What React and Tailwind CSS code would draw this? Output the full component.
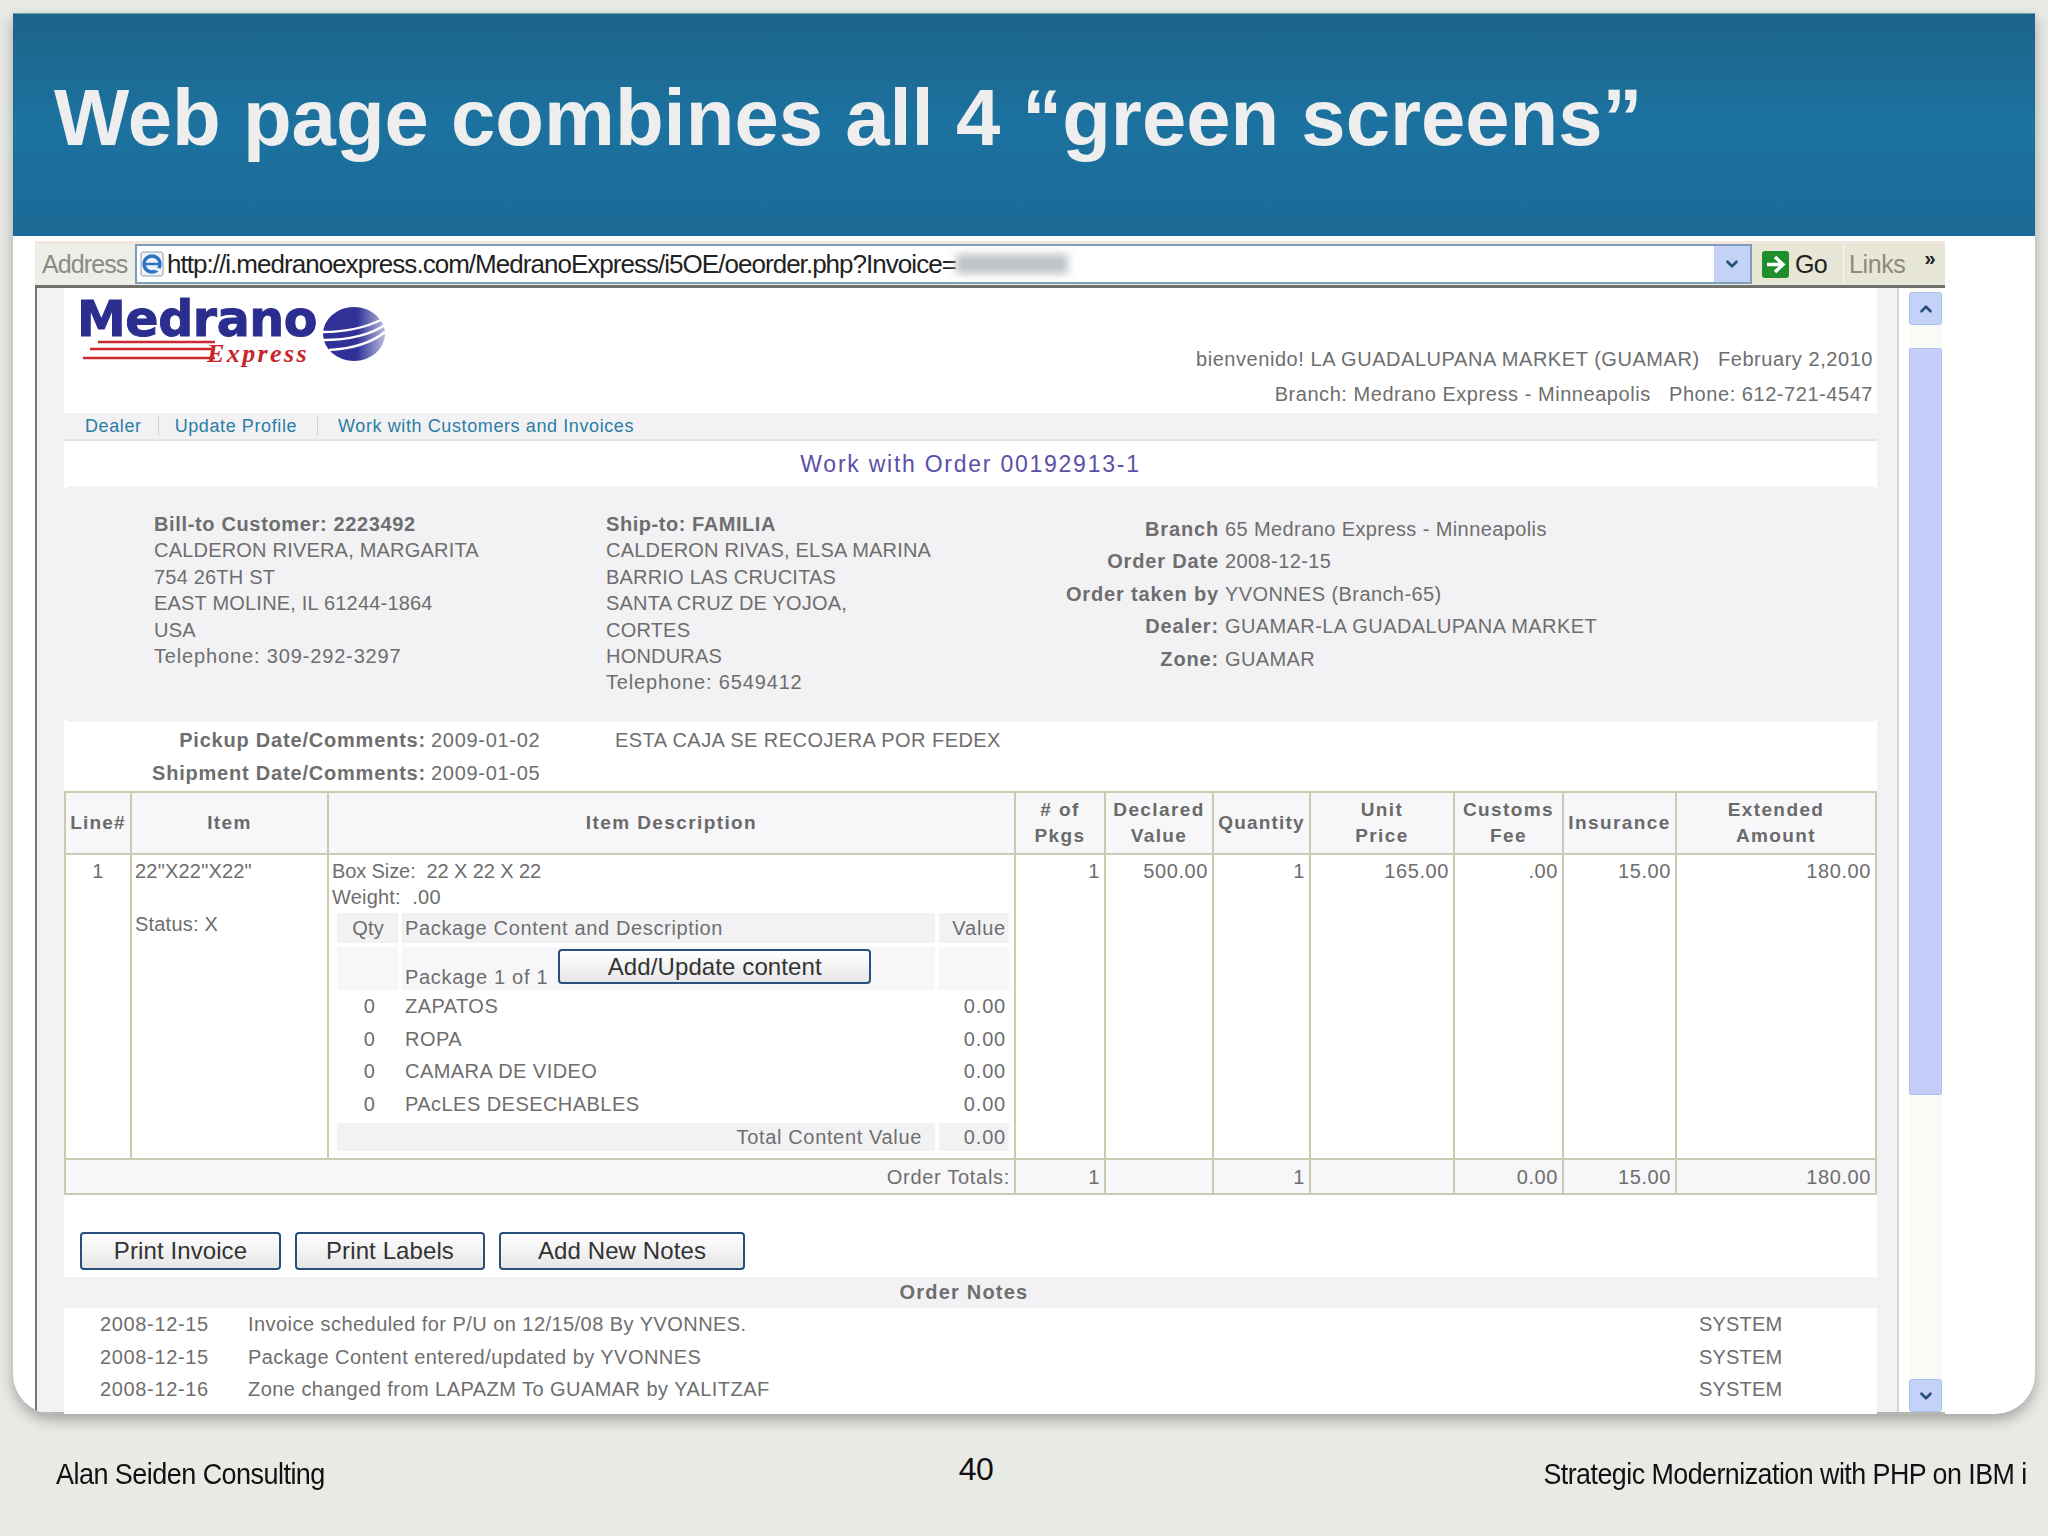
import { ChevronDown, ChevronUp } from 'lucide-react';

const billTo = ['CALDERON RIVERA, MARGARITA', '754 26TH ST', 'EAST MOLINE, IL 61244-1864', 'USA'];
const shipTo = ['CALDERON RIVAS, ELSA MARINA', 'BARRIO LAS CRUCITAS', 'SANTA CRUZ DE YOJOA,', 'CORTES', 'HONDURAS'];
const orderInfo = [
  ['Branch', '65 Medrano Express - Minneapolis'],
  ['Order Date', '2008-12-15'],
  ['Order taken by', 'YVONNES (Branch-65)'],
  ['Dealer:', 'GUAMAR-LA GUADALUPANA MARKET'],
  ['Zone:', 'GUAMAR']
];
const columnWidths = [66, 197, 687, 90, 108, 97, 144, 109, 113, 200];
const packageItems = ['ZAPATOS', 'ROPA', 'CAMARA DE VIDEO', 'PAcLES DESECHABLES'];
const orderNotes = [
  ['2008-12-15', 'Invoice scheduled for P/U on 12/15/08 By YVONNES.'],
  ['2008-12-15', 'Package Content entered/updated by YVONNES'],
  ['2008-12-16', 'Zone changed from LAPAZM To GUAMAR by YALITZAF']
];

function HeaderCell({ children }) {
  return (
    <th className="border-2 border-[#c9ccb2] bg-[#f7f7f9] p-0 text-center align-middle text-[19px] leading-[26px] font-bold tracking-[1.4px] text-[#6a6a6a]">
      {children}
    </th>
  );
}

function NumberCell({ children, shaded }) {
  return (
    <td className={`border-2 border-[#c9ccb2] pr-[4px] pl-1 text-right text-[20px] tracking-[0.6px] ${shaded ? 'bg-[#f7f7f9] py-0 align-middle' : 'bg-white pt-[1px] pb-0 align-top'}`}>
      {children}
    </td>
  );
}

function WebButton({ className, children }) {
  return (
    <button className={`rounded-[4px] border-2 border-[#27507f] bg-gradient-to-b from-white to-[#e6e6e6] text-[24px] leading-none tracking-[0.1px] text-[#333] ${className}`}>
      {children}
    </button>
  );
}

function Logo() {
  return (
    <div className="relative h-[110px] w-[320px]">
      <span className="absolute top-[5px] left-[0px] font-['DejaVu_Sans',sans-serif] text-[49px] leading-[38px] font-bold tracking-[-0.4px] text-[#2c2e8f] [-webkit-text-stroke:1px_#2c2e8f]">Medrano</span>
      <span className="absolute top-[48px] left-[130px] font-['Liberation_Serif',serif] text-[26px] leading-[20px] font-bold tracking-[2.4px] text-[#c8262c] italic">Express</span>
      <svg className="absolute top-0 left-0" width="320" height="80" viewBox="0 0 320 80">
        <g stroke="#cc2a2e" strokeWidth="2.5">
          <line x1="21" y1="46" x2="138" y2="46" />
          <line x1="13" y1="53" x2="138" y2="53" />
          <line x1="6" y1="62" x2="138" y2="62" />
        </g>
        <defs>
          <linearGradient id="globe" x1="0" x2="1">
            <stop offset="0.55" stopColor="#2f3196" />
            <stop offset="1" stopColor="#b9bbdd" />
          </linearGradient>
        </defs>
        <ellipse cx="277" cy="38" rx="31" ry="27" fill="url(#globe)" />
        <g fill="none" stroke="#fff" strokeWidth="2.5">
          <path d="M246 36 Q280 36 306 23" />
          <path d="M246 44 Q285 44 308 29" />
          <path d="M252 54 Q288 52 308 36" />
        </g>
      </svg>
    </div>
  );
}

function AddressBar() {
  return (
    <div className="flex h-[47px] items-start border-t-[3px] border-b-[3px] border-t-[#f3e6dc] border-b-[#6f706a] bg-[#eceee8]">
      <span className="mt-[5px] ml-[7px] w-[93px] text-[25px] leading-[30px] tracking-[-0.9px] text-[#8a8a86]">Address</span>
      <div className="flex h-[40px] w-[1617px] items-center border-2 border-[#7f9db9] bg-white">
        <svg className="ml-[3px] shrink-0" width="24" height="26" viewBox="0 0 24 26">
          <rect x="1" y="1" width="22" height="24" rx="2" fill="#eef3fb" stroke="#8aa0bd" />
          <circle cx="12" cy="13" r="8" fill="none" stroke="#2f74c0" strokeWidth="3.5" />
          <line x1="5" y1="13" x2="19" y2="13" stroke="#2f74c0" strokeWidth="2.5" />
          <line x1="14" y1="17" x2="22" y2="20" stroke="#eef3fb" strokeWidth="3" />
        </svg>
        <span className="ml-[3px] text-[26px] tracking-[-0.97px] whitespace-nowrap text-[#222]">http://i.medranoexpress.com/MedranoExpress/i5OE/oeorder.php?Invoice=</span>
        <div className="h-[20px] w-[112px] bg-[#bfc3c8] blur-[4px]"></div>
        <div className="ml-auto flex h-full w-[36px] items-center justify-center bg-[#c5d2f7] text-[#27507f]">
          <ChevronDown size={18} strokeWidth={3.5} />
        </div>
      </div>
      <div className="flex h-[41px] flex-1 items-center bg-[#e8e6d6]">
        <svg className="ml-[10px] shrink-0" width="27" height="27" viewBox="0 0 27 27">
          <rect width="27" height="27" rx="3" fill="#1f8f2c" />
          <path d="M5 13.5H20M13 6l8 7.5-8 7.5" fill="none" stroke="#fff" strokeWidth="3.5" />
        </svg>
        <span className="ml-[6px] w-[48px] text-[25px] tracking-[-0.8px] text-[#222]">Go</span>
        <span className="h-full border-l border-[#f8f8f0]"></span>
        <span className="ml-[5px] text-[25px] tracking-[-0.4px] text-[#8a8a80]">Links</span>
        <span className="mb-[14px] ml-[19px] text-[20px] leading-none font-bold text-[#222]">»</span>
      </div>
    </div>
  );
}

function OrderTable() {
  return (
    <table className="w-[1812px] table-fixed border-collapse border-2 border-[#c9ccb2]">
      <colgroup>
        {columnWidths.map((width) => (
          <col key={width} style={{ width }} />
        ))}
      </colgroup>
      <thead>
        <tr className="h-[62px]">
          <HeaderCell><span className="tracking-[1.2px]">Line#</span></HeaderCell>
          <HeaderCell>Item</HeaderCell>
          <HeaderCell>Item Description</HeaderCell>
          <HeaderCell># of<br />Pkgs</HeaderCell>
          <HeaderCell>Declared<br />Value</HeaderCell>
          <HeaderCell><span className="tracking-[1.2px]">Quantity</span></HeaderCell>
          <HeaderCell>Unit<br />Price</HeaderCell>
          <HeaderCell>Customs<br />Fee</HeaderCell>
          <HeaderCell><span className="tracking-[1.4px]">Insurance</span></HeaderCell>
          <HeaderCell>Extended<br />Amount</HeaderCell>
        </tr>
      </thead>
      <tbody>
        <tr className="h-[305px]">
          <td className="border-2 border-[#c9ccb2] p-0 pt-[1px] text-center align-top text-[20px]">1</td>
          <td className="border-2 border-[#c9ccb2] pt-[3px] pb-0 pl-[3px] align-top text-[20px] leading-[26.5px]">
            <div>22"X22"X22"</div>
            <div className="mt-[26px]">Status: X</div>
          </td>
          <td className="border-2 border-[#c9ccb2] pt-[3px] pb-0 pl-[3px] align-top text-[20px] leading-[26px]">
            <div className="tracking-[-0.1px]">Box Size:&nbsp; 22 X 22 X 22</div>
            <div>Weight:&nbsp; .00</div>
            <PackageContent />
          </td>
          <NumberCell>1</NumberCell>
          <NumberCell>500.00</NumberCell>
          <NumberCell>1</NumberCell>
          <NumberCell>165.00</NumberCell>
          <NumberCell>.00</NumberCell>
          <NumberCell>15.00</NumberCell>
          <NumberCell>180.00</NumberCell>
        </tr>
        <tr className="h-[35px] bg-[#f7f7f9]">
          <td colSpan={3} className="border-2 border-[#c9ccb2] px-1 py-0 text-right align-middle text-[20px] tracking-[0.7px]">Order Totals:</td>
          <NumberCell shaded>1</NumberCell>
          <NumberCell shaded></NumberCell>
          <NumberCell shaded>1</NumberCell>
          <NumberCell shaded></NumberCell>
          <NumberCell shaded>0.00</NumberCell>
          <NumberCell shaded>15.00</NumberCell>
          <NumberCell shaded>180.00</NumberCell>
        </tr>
      </tbody>
    </table>
  );
}

function PackageContent() {
  return (
    <div className="mt-[3px] ml-[5px] w-[672px]">
      <div className="flex h-[30px] items-center gap-[4px]">
        <span className="flex h-full w-[61px] items-center justify-end bg-[#f2f2f4] pr-[14px]">Qty</span>
        <span className="flex h-full flex-1 items-center bg-[#f2f2f4] pl-[3px] tracking-[0.65px]">Package Content and Description</span>
        <span className="flex h-full w-[70px] items-center justify-end bg-[#f2f2f4] pr-[3px] tracking-[0.8px]">Value</span>
      </div>
      <div className="mt-[4px] flex h-[43px] gap-[4px]">
        <span className="h-full w-[61px] bg-[#f7f7f9]"></span>
        <div className="flex h-full flex-1 bg-[#f7f7f9] pl-[3px]">
          <span className="self-end tracking-[0.7px] whitespace-nowrap">Package 1 of 1</span>
          <WebButton className="mt-[2px] ml-[10px] h-[35px] w-[313px]">Add/Update content</WebButton>
        </div>
        <span className="h-full w-[70px] bg-[#f7f7f9]"></span>
      </div>
      {packageItems.map((item) => (
        <div key={item} className="flex h-[32.5px] items-center first-of-type:mt-[4px]">
          <span className="w-[38px] text-right">0</span>
          <span className="ml-[30px] flex-1 tracking-[0.45px]">{item}</span>
          <span className="pr-[3px] tracking-[0.8px]">0.00</span>
        </div>
      ))}
      <div className="mt-[3px] flex h-[28px] items-center gap-[4px]">
        <span className="flex h-full flex-1 items-center justify-end bg-[#f2f2f4] pr-[13px] tracking-[0.65px]">Total Content Value</span>
        <span className="flex h-full w-[70px] items-center justify-end bg-[#f2f2f4] pr-[3px] tracking-[0.8px]">0.00</span>
      </div>
    </div>
  );
}

function Scrollbar() {
  return (
    <div className="ml-[10px] flex w-[33px] flex-col bg-[#fbfbf6] pt-[4px]">
      <div className="flex h-[33px] items-center justify-center rounded-[3px] border border-[#a9c2ee] bg-[#c5d2f7] text-[#27507f]">
        <ChevronUp size={18} strokeWidth={3.5} />
      </div>
      <div className="mt-[23px] h-[747px] rounded-[2px] border border-[#b0bff0] bg-[#c6cdfa]"></div>
      <div className="mt-auto flex h-[33px] items-center justify-center rounded-[3px] border border-[#a9c2ee] bg-[#c5d2f7] text-[#27507f]">
        <ChevronDown size={18} strokeWidth={3.5} />
      </div>
    </div>
  );
}

function OrderPage() {
  return (
    <div className="w-[1813px] text-[20px] tracking-[0.2px] text-[#6e6e6e]">
      <div className="flex h-[125px] bg-white">
        <div className="ml-[13px] pt-[8px]"><Logo /></div>
        <div className="ml-auto pt-[54px] pr-[4px] text-right leading-[35px] tracking-[0.55px]">
          <div>bienvenido! LA GUADALUPANA MARKET (GUAMAR)&nbsp;&nbsp; February 2,2010</div>
          <div>Branch: Medrano Express - Minneapolis&nbsp;&nbsp; Phone: 612-721-4547</div>
        </div>
      </div>
      <div className="flex h-[28px] items-center border-b-2 border-[#e4e4e4] bg-[#f2f2f4] pl-[21px] text-[18px] tracking-[0.6px] text-[#2a7da3]">
        <span>Dealer</span>
        <span className="mx-[16px] h-[18px] border-l border-[#cfcfcf]"></span>
        <span>Update Profile</span>
        <span className="mx-[20px] h-[18px] border-l border-[#cfcfcf]"></span>
        <span>Work with Customers and Invoices</span>
      </div>
      <div className="h-[45px] bg-white pt-[8px] text-center text-[23px] leading-[30px] tracking-[1.75px] text-[#5a50a8]">Work with Order 00192913-1</div>
      <div className="flex h-[236px] rounded-[6px] bg-[#f2f2f4] pt-[25px] leading-[26.4px]">
        <div className="ml-[90px] w-[452px]">
          <div className="font-bold tracking-[0.65px]">Bill-to Customer: 2223492</div>
          {billTo.map((line) => <div key={line}>{line}</div>)}
          <div className="tracking-[0.85px]">Telephone: 309-292-3297</div>
        </div>
        <div className="w-[400px]">
          <div className="font-bold tracking-[0.55px]">Ship-to: FAMILIA</div>
          {shipTo.map((line) => <div key={line}>{line}</div>)}
          <div className="tracking-[0.85px]">Telephone: 6549412</div>
        </div>
        <div className="grid grid-cols-[213px_1fr] content-start gap-x-[6px] pt-[2px] leading-[32.4px] tracking-[0.4px]">
          {orderInfo.map(([label, value]) => (
            <div key={label} className="contents">
              <span className="text-right font-bold tracking-[0.85px] whitespace-nowrap">{label}</span>
              <span className="whitespace-nowrap">{value}</span>
            </div>
          ))}
        </div>
      </div>
      <div className="h-[69px] bg-white pt-[2px] leading-[33px]">
        <div className="flex">
          <span className="w-[362px] text-right font-bold tracking-[0.8px]">Pickup Date/Comments:</span>
          <span className="ml-[5px] w-[184px] tracking-[0.7px]">2009-01-02</span>
          <span className="tracking-[0.45px]">ESTA CAJA SE RECOJERA POR FEDEX</span>
        </div>
        <div className="flex">
          <span className="w-[362px] text-right font-bold tracking-[0.8px]">Shipment Date/Comments:</span>
          <span className="ml-[5px] tracking-[0.7px]">2009-01-05</span>
        </div>
      </div>
      <OrderTable />
      <div className="flex h-[82px] items-start gap-[14px] bg-white pt-[37px] pl-[16px]">
        <WebButton className="h-[38px] w-[201px]">Print Invoice</WebButton>
        <WebButton className="h-[38px] w-[190px]">Print Labels</WebButton>
        <WebButton className="h-[38px] w-[246px]">Add New Notes</WebButton>
      </div>
      <div className="h-[31px] bg-[#f2f2f4] pr-[13px] text-center leading-[31px] font-bold tracking-[1.2px]">Order Notes</div>
      <div className="h-[107px] bg-white leading-[32.7px]">
        {orderNotes.map(([date, note]) => (
          <div key={note} className="flex">
            <span className="ml-[36px] w-[148px] tracking-[0.65px]">{date}</span>
            <span className="w-[1451px] tracking-[0.45px]">{note}</span>
            <span>SYSTEM</span>
          </div>
        ))}
      </div>
    </div>
  );
}

export default function App() {
  return (
    <div className="flex h-[1536px] w-[2048px] flex-col overflow-hidden bg-[#e8eae6] px-[13px] pt-[13px] font-['Liberation_Sans',sans-serif]">
      <div className="h-[1401px] w-[2022px] overflow-hidden rounded-b-[40px] bg-white shadow-[0_6px_14px_rgba(0,0,0,0.3)]">
        <div className="flex h-[223px] items-start border-t border-[#5fa0b4] bg-gradient-to-b from-[#1c6488] via-[#1c72a0] to-[#1c6a96] pt-[59px] pl-[41px]">
          <h1 className="text-[79.7px] leading-[90px] font-bold text-[#eeeeee]">Web page combines all 4 “green screens”</h1>
        </div>
        <div className="ml-[22px] h-[1178px] w-[1910px] overflow-hidden">
          <div className="h-[5px]"></div>
          <AddressBar />
          <div className="flex h-[1126px] border-b-2 border-l-2 border-b-[#b5b7b2] border-l-[#77796c]">
            <div className="w-[27px] bg-[#f2f2f4]"></div>
            <OrderPage />
            <div className="w-[22px] border-r-2 border-[#d4d4d8] bg-[#f2f2f4]"></div>
            <Scrollbar />
          </div>
        </div>
      </div>
      <div className="mt-[35px] grid w-[2014px] grid-cols-[1fr_auto_1fr] items-start text-[30px] leading-[40px] tracking-[-0.6px] text-[#111]">
        <span className="mt-[5px] ml-[43px] origin-left scale-x-[0.9] whitespace-nowrap">Alan Seiden Consulting</span>
        <span className="mr-[88px] text-[32px]">40</span>
        <span className="mt-[5px] origin-right scale-x-[0.895] text-right whitespace-nowrap">Strategic Modernization with PHP on IBM i</span>
      </div>
    </div>
  );
}
